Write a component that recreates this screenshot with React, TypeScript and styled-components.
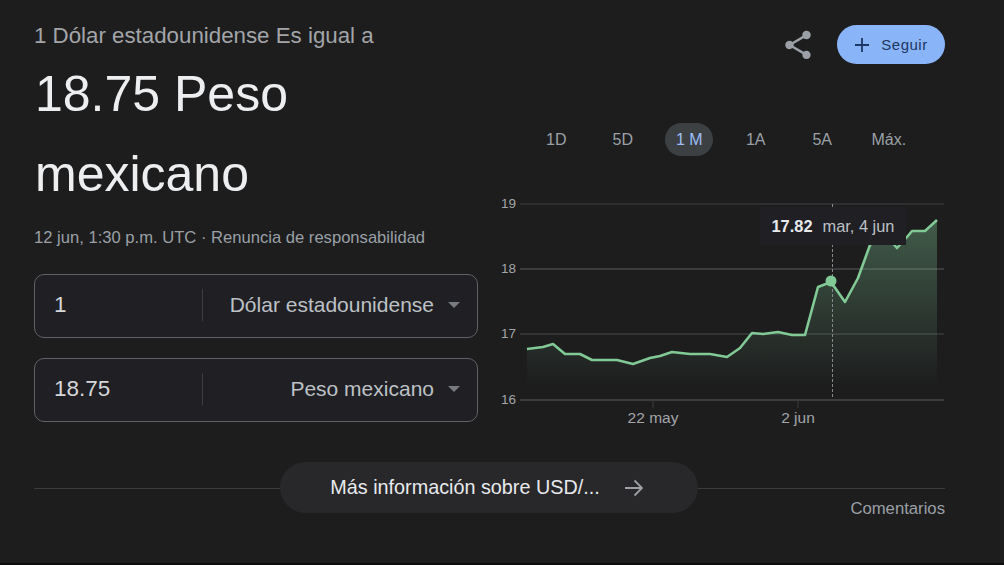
import styled, { createGlobalStyle } from "styled-components";

const GlobalStyle = createGlobalStyle`
  html, body {
    margin: 0;
    padding: 0;
    background: #1d1d1e;
  }
`;

const linePoints: [number, number][] = [
  [527, 349], [543, 347], [553, 344], [565, 354], [580, 354], [592, 360], [617, 360],
  [633, 364], [650, 358], [660, 356], [672, 352], [690, 354], [710, 354], [727, 357],
  [740, 348], [752, 333], [763, 334], [778, 332], [792, 335], [805, 335], [818, 287],
  [831, 282], [845, 302], [858, 278], [870, 245], [883, 232], [897, 248], [907, 237],
  [912, 231], [925, 231], [937, 220],
];

const linePath = linePoints.map(([x, y]) => `${x},${y}`).join(" ");
const areaPath = `527,398 ${linePath} 937,398`;

const gridLines = [
  { y: 204, label: "19", color: "#343538" },
  { y: 269, label: "18", color: "#46474a" },
  { y: 334, label: "17", color: "#3a3b3e" },
  { y: 400, label: "16", color: "#46474a" },
];

const ranges = ["1D", "5D", "1 M", "1A", "5A", "Máx."];

const xTicks = [
  { x: 653, label: "22 may" },
  { x: 798, label: "2 jun" },
];

function Converter({ value, currency }: { value: string; currency: string }) {
  return (
    <Field>
      <Amount>{value}</Amount>
      <Currency>
        <CurrencyName>{currency}</CurrencyName>
        <Caret />
      </Currency>
    </Field>
  );
}

function Chart() {
  return (
    <ChartBox>
      <svg width="445" height="240" viewBox="500 190 445 240">
        <defs>
          <linearGradient id="area" gradientUnits="userSpaceOnUse" x1="0" y1="220" x2="0" y2="386">
            <stop offset="0" stopColor="#81c995" stopOpacity="0.36" />
            <stop offset="1" stopColor="#81c995" stopOpacity="0" />
          </linearGradient>
        </defs>
        {gridLines.map((g) => (
          <g key={g.label}>
            <line x1="520" x2="944" y1={g.y} y2={g.y} stroke={g.color} strokeWidth="1.4" />
            <text x="501" y={g.y + 3.6} fill="#a3a5a9" fontSize="13.5" fontFamily="'Liberation Sans', Arial, sans-serif">
              {g.label}
            </text>
          </g>
        ))}
        <polygon points={areaPath} fill="url(#area)" />
        <line x1="832.5" x2="832.5" y1="204" y2="399" stroke="#85888c" strokeWidth="1" strokeDasharray="3 2" />
        <polyline points={linePath} fill="none" stroke="#81c995" strokeWidth="2.6" strokeLinejoin="round" />
        <circle cx="831" cy="281" r="5.5" fill="#81c995" />
        {xTicks.map((t) => (
          <g key={t.label}>
            <line x1={t.x} x2={t.x} y1="400" y2="408" stroke="#3c3d40" />
            <text
              x={t.x}
              y="423"
              textAnchor="middle"
              fill="#a3a5a9"
              fontSize="15.5"
              fontFamily="'Liberation Sans', Arial, sans-serif"
            >
              {t.label}
            </text>
          </g>
        ))}
      </svg>
      <Tooltip>
        <strong>17.82</strong>
        <span>mar, 4 jun</span>
      </Tooltip>
    </ChartBox>
  );
}

export default function App() {
  return (
    <Page>
      <GlobalStyle />
      <Main>
        <LeftColumn>
          <Subtitle>1 Dólar estadounidense Es igual a</Subtitle>
          <Title>18.75 Peso mexicano</Title>
          <DateLine>12 jun, 1:30 p.m. UTC · Renuncia de responsabilidad</DateLine>
          <Converter value="1" currency="Dólar estadounidense" />
          <Converter value="18.75" currency="Peso mexicano" />
        </LeftColumn>
        <RightColumn>
          <Actions>
            <ShareIcon viewBox="0 0 24 24">
              <path d="M18 16.08c-.76 0-1.44.3-1.96.77L8.91 12.7c.05-.23.09-.46.09-.7s-.04-.47-.09-.7l7.05-4.11c.54.5 1.25.81 2.04.81 1.66 0 3-1.34 3-3s-1.34-3-3-3-3 1.34-3 3c0 .24.04.47.09.7L8.04 9.81C7.5 9.31 6.79 9 6 9c-1.66 0-3 1.34-3 3s1.34 3 3 3c.79 0 1.5-.31 2.04-.81l7.12 4.16c-.05.21-.08.43-.08.65 0 1.61 1.31 2.92 2.92 2.92 1.61 0 2.92-1.31 2.92-2.92s-1.31-2.92-2.92-2.92z" />
            </ShareIcon>
            <FollowButton>
              <svg width="16" height="16" viewBox="0 0 16 16">
                <path d="M8 1v14M1 8h14" stroke="#1c3763" strokeWidth="1.8" />
              </svg>
              Seguir
            </FollowButton>
          </Actions>
          <RangeTabs>
            {ranges.map((r) => (
              <RangeTab key={r} $active={r === "1 M"}>
                {r}
              </RangeTab>
            ))}
          </RangeTabs>
          <Chart />
        </RightColumn>
      </Main>
      <Footer>
        <MoreRow>
          <Divider />
          <MoreButton>
            Más información sobre USD/...
            <svg width="22" height="22" viewBox="0 0 22 22" fill="none">
              <path d="M2 11h17M11.5 3.5 19 11l-7.5 7.5" stroke="#9aa0a6" strokeWidth="1.8" />
            </svg>
          </MoreButton>
          <Divider />
        </MoreRow>
        <Feedback>Comentarios</Feedback>
      </Footer>
    </Page>
  );
}

const Page = styled.div`
  width: 1004px;
  height: 565px;
  box-sizing: border-box;
  padding: 0 59px 0 34px;
  background: #1d1d1e;
  border-bottom: 2px solid #0c0c0d;
  font-family: "Liberation Sans", Arial, sans-serif;
  overflow: hidden;
`;

const Main = styled.div`
  display: grid;
  grid-template-columns: 444px 445px;
  column-gap: 22px;
  height: 462px;
`;

const LeftColumn = styled.div`
  display: flex;
  flex-direction: column;
  padding-top: 24px;
`;

const Subtitle = styled.div`
  font-size: 22.3px;
  line-height: 24px;
  color: #a3a5a9;
`;

const Title = styled.div`
  width: 340px;
  margin: 6px 0 0 1px;
  font-size: 50px;
  line-height: 80px;
  color: #eceef0;
`;

const DateLine = styled.div`
  margin-top: 14px;
  font-size: 16.6px;
  line-height: 20px;
  color: #9aa0a6;
`;

const Field = styled.div`
  display: grid;
  grid-template-columns: 167px 1fr;
  align-items: center;
  height: 64px;
  box-sizing: border-box;
  margin-top: 20px;
  padding-bottom: 3px;
  border: 1px solid #5f6165;
  border-radius: 10px;
  background: #202024;

  ${DateLine} + & {
    margin-top: 26px;
  }
`;

const Amount = styled.div`
  padding-left: 19px;
  font-size: 22.5px;
  color: #d5d7da;
`;

const Currency = styled.div`
  display: flex;
  align-items: center;
  justify-content: flex-end;
  gap: 14px;
  height: 32px;
  padding-right: 17px;
  border-left: 1px solid #3c3d41;
`;

const CurrencyName = styled.span`
  font-size: 21px;
  color: #bdc1c6;
`;

const Caret = styled.span`
  width: 0;
  height: 0;
  border-left: 6px solid transparent;
  border-right: 6px solid transparent;
  border-top: 6px solid #777a7e;
`;

const RightColumn = styled.div`
  display: flex;
  flex-direction: column;
  padding-top: 25px;
`;

const Actions = styled.div`
  display: flex;
  align-items: center;
  justify-content: flex-end;
  gap: 22px;
  height: 39px;
`;

const ShareIcon = styled.svg`
  width: 34px;
  height: 34px;
  fill: #9aa0a6;
`;

const FollowButton = styled.button`
  display: flex;
  align-items: center;
  justify-content: center;
  gap: 11px;
  width: 108px;
  height: 39px;
  padding: 0;
  border: none;
  border-radius: 20px;
  background: #8ab4f8;
  color: #1c3763;
  font-family: inherit;
  font-size: 15px;
  letter-spacing: 0.5px;
`;

const RangeTabs = styled.div`
  display: grid;
  grid-template-columns: repeat(6, 66.5px);
  justify-items: center;
  align-items: center;
  margin: 59px 0 0 23px;
  height: 33px;
`;

const RangeTab = styled.div<{ $active?: boolean }>`
  display: flex;
  align-items: center;
  justify-content: center;
  width: 48px;
  height: 33px;
  border-radius: 17px;
  font-size: 16px;
  color: ${(p) => (p.$active ? "#9dbdf5" : "#9aa0a6")};
  background: ${(p) => (p.$active ? "#3c4043" : "transparent")};
`;

const ChartBox = styled.div`
  position: relative;
  width: 445px;
  height: 240px;
  margin-top: 34px;

  svg {
    display: block;
  }
`;

const Tooltip = styled.div`
  position: absolute;
  left: 260px;
  top: 17px;
  display: flex;
  align-items: center;
  justify-content: center;
  gap: 10px;
  width: 146px;
  height: 38px;
  background: #1f1f24;
  font-size: 16.4px;
  color: #bdc1c6;

  strong {
    color: #e8eaed;
  }
`;

const Footer = styled.div`
  display: flex;
  flex-direction: column;
`;

const MoreRow = styled.div`
  display: grid;
  grid-template-columns: 246px 418px 1fr;
  align-items: center;
  height: 51px;
`;

const Divider = styled.div`
  height: 1px;
  margin-top: 1px;
  background: #3a3b3e;
`;

const MoreButton = styled.div`
  display: flex;
  align-items: center;
  justify-content: center;
  gap: 23px;
  height: 51px;
  padding-right: 3px;
  box-sizing: border-box;
  border-radius: 26px;
  background: #28282a;
  color: #e8eaed;
  font-size: 19.8px;
`;

const Feedback = styled.div`
  margin-top: -14px;
  text-align: right;
  font-size: 16.7px;
  line-height: 20px;
  color: #9aa0a6;
`;
